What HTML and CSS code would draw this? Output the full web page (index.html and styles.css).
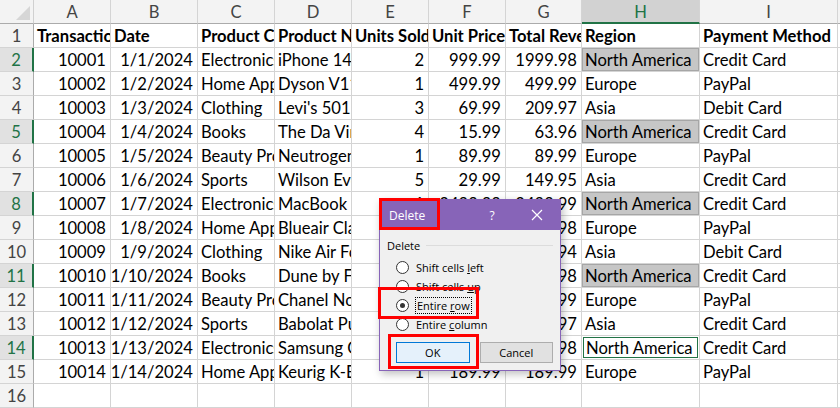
FILE: index.html
```html
<!DOCTYPE html>
<html>
<head>
<meta charset="utf-8">
<link rel="stylesheet" href="styles.css">
</head>
<body>
<div class="page">
  <div class="sheet">
    <div class="corner"><span class="tri"></span></div>
    <div class="ch">A</div><div class="ch">B</div><div class="ch">C</div><div class="ch">D</div><div class="ch">E</div><div class="ch">F</div><div class="ch">G</div><div class="ch sel">H</div><div class="ch">I</div><div class="ch"></div>

    <div class="rh">1</div>
    <div class="c b">Transaction ID</div><div class="c b">Date</div><div class="c b">Product Category</div><div class="c b">Product Name</div><div class="c b">Units Sold</div><div class="c b">Unit Price</div><div class="c b">Total Revenue</div><div class="c b">Region</div><div class="c b">Payment Method</div><div class="c"></div>

    <div class="rh sel">2</div>
    <div class="c n">10001</div><div class="c n">1/1/2024</div><div class="c">Electronics</div><div class="c">iPhone 14 Pro</div><div class="c n">2</div><div class="c n">999.99</div><div class="c n">1999.98</div><div class="c hl"><span>North America</span></div><div class="c">Credit Card</div><div class="c"></div>

    <div class="rh">3</div>
    <div class="c n">10002</div><div class="c n">1/2/2024</div><div class="c">Home Appliances</div><div class="c">Dyson V11 Vacuum</div><div class="c n">1</div><div class="c n">499.99</div><div class="c n">499.99</div><div class="c">Europe</div><div class="c">PayPal</div><div class="c"></div>

    <div class="rh">4</div>
    <div class="c n">10003</div><div class="c n">1/3/2024</div><div class="c">Clothing</div><div class="c">Levi's 501 Jeans</div><div class="c n">3</div><div class="c n">69.99</div><div class="c n">209.97</div><div class="c">Asia</div><div class="c">Debit Card</div><div class="c"></div>

    <div class="rh sel">5</div>
    <div class="c n">10004</div><div class="c n">1/4/2024</div><div class="c">Books</div><div class="c">The Da Vinci Code</div><div class="c n">4</div><div class="c n">15.99</div><div class="c n">63.96</div><div class="c hl"><span>North America</span></div><div class="c">Credit Card</div><div class="c"></div>

    <div class="rh">6</div>
    <div class="c n">10005</div><div class="c n">1/5/2024</div><div class="c">Beauty Products</div><div class="c">Neutrogena Skincare</div><div class="c n">1</div><div class="c n">89.99</div><div class="c n">89.99</div><div class="c">Europe</div><div class="c">PayPal</div><div class="c"></div>

    <div class="rh">7</div>
    <div class="c n">10006</div><div class="c n">1/6/2024</div><div class="c">Sports</div><div class="c">Wilson Evolution Basketball</div><div class="c n">5</div><div class="c n">29.99</div><div class="c n">149.95</div><div class="c">Asia</div><div class="c">Credit Card</div><div class="c"></div>

    <div class="rh sel">8</div>
    <div class="c n">10007</div><div class="c n">1/7/2024</div><div class="c">Electronics</div><div class="c">MacBook Pro 16</div><div class="c n">1</div><div class="c n">2499.99</div><div class="c n">2499.99</div><div class="c hl"><span>North America</span></div><div class="c">Credit Card</div><div class="c"></div>

    <div class="rh">9</div>
    <div class="c n">10008</div><div class="c n">1/8/2024</div><div class="c">Home Appliances</div><div class="c">Blueair Classic 480i</div><div class="c n">2</div><div class="c n">299.99</div><div class="c n">599.98</div><div class="c">Europe</div><div class="c">PayPal</div><div class="c"></div>

    <div class="rh">10</div>
    <div class="c n">10009</div><div class="c n">1/9/2024</div><div class="c">Clothing</div><div class="c">Nike Air Force 1</div><div class="c n">6</div><div class="c n">89.99</div><div class="c n">539.94</div><div class="c">Asia</div><div class="c">Debit Card</div><div class="c"></div>

    <div class="rh sel">11</div>
    <div class="c n">10010</div><div class="c n">1/10/2024</div><div class="c">Books</div><div class="c">Dune by Frank Herbert</div><div class="c n">2</div><div class="c n">9.99</div><div class="c n">19.98</div><div class="c hl"><span>North America</span></div><div class="c">Credit Card</div><div class="c"></div>

    <div class="rh">12</div>
    <div class="c n">10011</div><div class="c n">1/11/2024</div><div class="c">Beauty Products</div><div class="c">Chanel No. 5 Perfume</div><div class="c n">1</div><div class="c n">129.99</div><div class="c n">129.99</div><div class="c">Europe</div><div class="c">PayPal</div><div class="c"></div>

    <div class="rh">13</div>
    <div class="c n">10012</div><div class="c n">1/12/2024</div><div class="c">Sports</div><div class="c">Babolat Pure Drive</div><div class="c n">3</div><div class="c n">199.99</div><div class="c n">599.97</div><div class="c">Asia</div><div class="c">Credit Card</div><div class="c"></div>

    <div class="rh sel">14</div>
    <div class="c n">10013</div><div class="c n">1/13/2024</div><div class="c">Electronics</div><div class="c">Samsung Galaxy S23</div><div class="c n">2</div><div class="c n">999.99</div><div class="c n">1999.98</div><div class="c act"><span>North America</span></div><div class="c">Credit Card</div><div class="c"></div>

    <div class="rh">15</div>
    <div class="c n">10014</div><div class="c n">1/14/2024</div><div class="c">Home Appliances</div><div class="c">Keurig K-Elite</div><div class="c n">1</div><div class="c n">189.99</div><div class="c n">189.99</div><div class="c">Europe</div><div class="c">PayPal</div><div class="c"></div>

    <div class="rh">16</div>
    <div class="c"></div><div class="c"></div><div class="c"></div><div class="c"></div><div class="c"></div><div class="c"></div><div class="c"></div><div class="c"></div><div class="c"></div><div class="c"></div>
  </div>

  <div class="dialog">
    <div class="titlebar">
      <span class="title">Delete</span>
      <span class="help">?</span>
      <span class="close">
        <svg width="12" height="12" viewBox="0 0 12 12"><path d="M1 1 L11 11 M11 1 L1 11" stroke="#fff" stroke-width="1.2" fill="none"/></svg>
      </span>
    </div>
    <div class="body">
      <div class="group"><span>Delete</span><span class="rule"></span></div>
      <div class="options">
        <div class="opt"><span class="radio"></span><span class="lbl">Shift cells <u>l</u>eft</span></div>
        <div class="opt"><span class="radio"></span><span class="lbl">Shift cells <u>u</u>p</span></div>
        <div class="opt"><span class="radio on"></span><span class="lbl focus">Entire <u>r</u>ow</span></div>
        <div class="opt"><span class="radio"></span><span class="lbl">Entire <u>c</u>olumn</span></div>
      </div>
      <div class="buttons">
        <button class="btn primary">OK</button>
        <button class="btn">Cancel</button>
      </div>
    </div>
  </div>

  <div class="mark mark-title"></div>
  <div class="mark mark-row"></div>
  <div class="mark mark-ok"></div>
</div>
</body>
</html>
```
FILE: styles.css
```css
* { box-sizing: border-box; }
html, body { margin: 0; padding: 0; background: #fff; }
.page {
  position: relative;
  width: 840px;
  height: 408px;
  overflow: hidden;
}
.sheet {
  display: grid;
  grid-template-columns: 34px 77px 87px 77px 77px 77px 77px 76px 118px 138px 40px;
  grid-auto-rows: 24px;
  font-family: Lato, "Liberation Sans", sans-serif;
  font-size: 16.6px;
  color: #000;
}
.corner {
  position: relative;
  background: #f3f3f3;
  border-right: 1px solid #d0d0d0;
  border-bottom: 1px solid #ababab;
}
.corner .tri {
  position: absolute;
  right: 3px;
  bottom: 3px;
  width: 0;
  height: 0;
  border-left: 14px solid transparent;
  border-bottom: 14px solid #d6d6d6;
}
.ch {
  background: #f3f3f3;
  border-right: 1px solid #d4d4d4;
  border-bottom: 1px solid #ababab;
  color: #444;
  display: flex;
  align-items: center;
  justify-content: center;
  padding-top: 1px;
}
.ch.sel {
  background: #d2d2d2;
  color: #217346;
  border-bottom: 2px solid #217346;
}
.rh {
  background: #f3f3f3;
  border-right: 1px solid #ababab;
  border-bottom: 1px solid #d4d4d4;
  color: #444;
  display: flex;
  align-items: center;
  justify-content: center;
  padding-top: 1px;
}
.rh.sel {
  background: #e1e1e1;
  color: #217346;
  border-right: 2px solid #217346;
}
.c {
  border-right: 1px solid #d4d4d4;
  border-bottom: 1px solid #d4d4d4;
  white-space: nowrap;
  overflow: hidden;
  display: flex;
  align-items: center;
  padding: 1px 3px 0 3px;
}
.c.b { font-weight: 700; }
.c.n { justify-content: flex-end; padding-right: 4px; }
.c.hl { padding: 0; }
.c.hl span {
  flex: 1;
  align-self: stretch;
  display: flex;
  align-items: center;
  padding: 1px 2px 0 2px;
  background: #c6c6c6;
  border: 1px solid #a6a6a6;
}
.c.act { padding: 0; }
.c.act span {
  flex: 1;
  align-self: stretch;
  display: flex;
  align-items: center;
  padding: 1px 2px 0 2px;
  border: 1px solid #217346;
  margin: 1px;
}

/* dialog */
.dialog {
  position: absolute;
  left: 379px;
  top: 199px;
  width: 182px;
  height: 172px;
  border: 1px solid #8764b8;
  background: #f0f0f0;
  box-shadow: 2px 3px 8px rgba(0,0,0,0.25);
  font-family: "Open Sans", "Noto Sans", sans-serif;
  font-size: 11px;
  color: #000;
  display: flex;
  flex-direction: column;
}
.titlebar {
  height: 30px;
  background: #8764b8;
  color: #fff;
  display: flex;
  align-items: center;
  padding-left: 9px;
  font-size: 12px;
}
.title { flex: 1; }
.help { width: 20px; text-align: center; margin-right: 25px; font-size: 12px; }
.close { width: 20px; display: flex; justify-content: center; margin-right: 13px; }
.body {
  padding: 7px 7px 0 7px;
  display: flex;
  flex-direction: column;
}
.group {
  display: flex;
  align-items: center;
  gap: 6px;
  height: 16px;
}
.group .rule { flex: 1; height: 1px; background: #dcdcdc; }
.options {
  margin-top: 5px;
  padding-left: 9px;
  display: flex;
  flex-direction: column;
}
.opt {
  height: 19px;
  display: flex;
  align-items: center;
  gap: 7px;
}
.radio {
  width: 13px;
  height: 13px;
  border-radius: 50%;
  border: 1px solid #333;
  background: #fff;
  display: flex;
  align-items: center;
  justify-content: center;
}
.radio.on::after {
  content: "";
  width: 5px;
  height: 5px;
  border-radius: 50%;
  background: #333;
}
.lbl { white-space: nowrap; }
.lbl.focus { outline: 1px dotted #000; outline-offset: 0; padding: 0 1px; }
.buttons {
  margin-top: 8px;
  padding-left: 9px;
  display: flex;
  gap: 10px;
}
.btn {
  width: 74px;
  height: 21px;
  font-family: "Open Sans", "Noto Sans", sans-serif;
  font-size: 11px;
  color: #000;
  background: #e1e1e1;
  border: 1px solid #adadad;
  padding: 0;
}
.btn.primary {
  background: #e5f1fb;
  border: 1px solid #0078d7;
}

/* annotation boxes */
.mark {
  position: absolute;
  border: 3px solid #ff0000;
}
.mark-title { left: 379px; top: 198px; width: 61px; height: 32px; }
.mark-row { left: 378px; top: 287px; width: 101px; height: 32px; }
.mark-ok { left: 388px; top: 334px; width: 91px; height: 35px; }
```
